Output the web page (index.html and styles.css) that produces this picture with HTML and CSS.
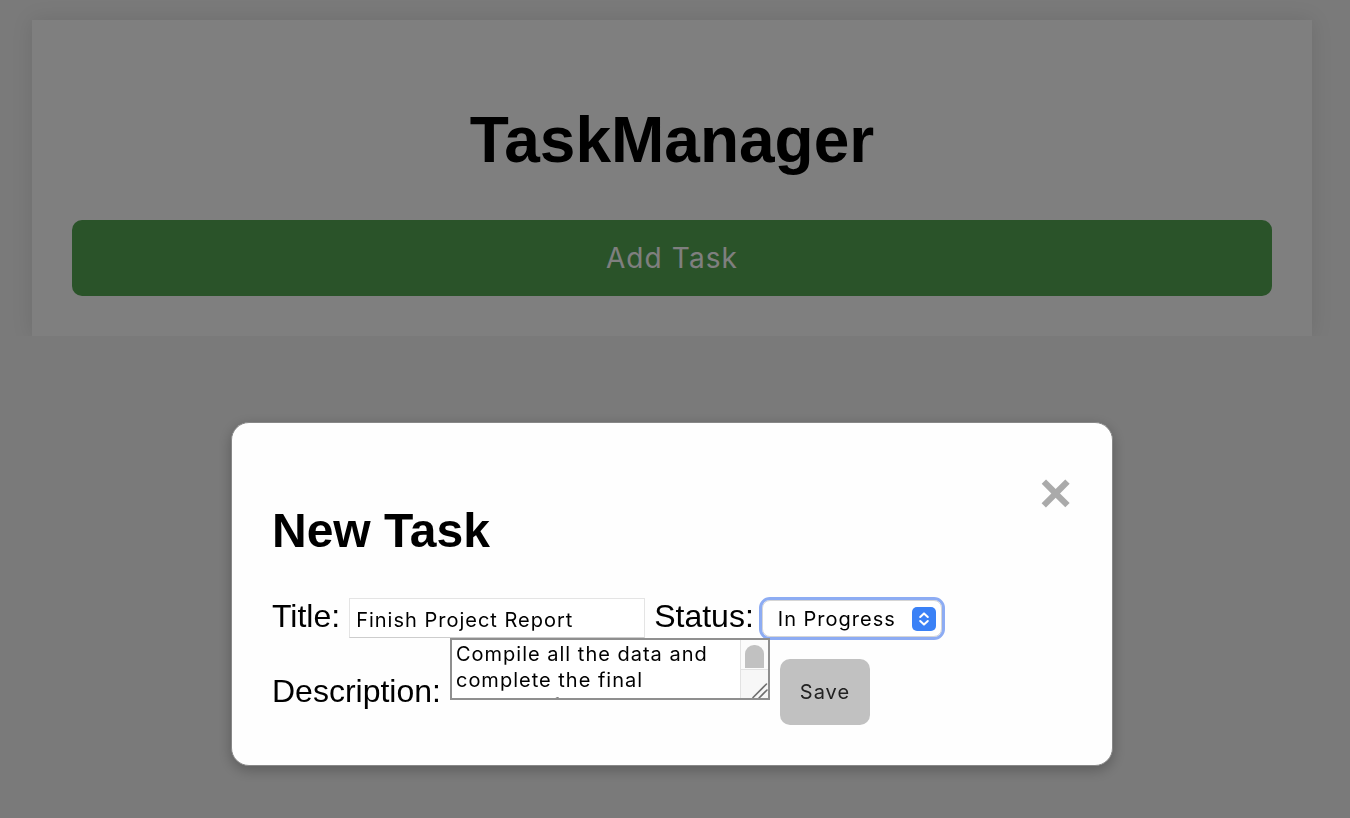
FILE: index.html
```html
<!DOCTYPE html>
<html lang="en">
<head>
<meta charset="utf-8">
<title>TaskManager</title>
<link rel="stylesheet" href="styles.css">
</head>
<body>
<div class="app">
  <h1 class="app-title">TaskManager</h1>
  <button class="add-btn" type="button">Add Task</button>
</div>

<div class="overlay">
  <div class="modal">
    <span class="close">&times;</span>
    <h2 class="modal-title">New Task</h2>
    <form class="task-form">
      <div class="row row-1">
        <label class="lbl" for="title">Title:</label>
        <input id="title" class="text-input" type="text" value="Finish Project Report">
        <label class="lbl" for="status">Status:</label>
        <span class="select-wrap">
          <select id="status" class="select">
            <option>In Progress</option>
          </select>
          <svg class="select-badge" width="24" height="24" viewBox="0 0 24 24" aria-hidden="true">
            <rect x="0" y="0" width="24" height="24" rx="5" fill="#3a81f6"/>
            <path d="M8.2 10 L12 6.4 L15.8 10" fill="none" stroke="#fff" stroke-width="2" stroke-linecap="round" stroke-linejoin="round"/>
            <path d="M8.2 14 L12 17.6 L15.8 14" fill="none" stroke="#fff" stroke-width="2" stroke-linecap="round" stroke-linejoin="round"/>
          </svg>
        </span>
      </div>
      <div class="row row-2">
        <label class="lbl lbl-desc" for="desc">Description:</label>
        <span class="desc-wrap">
          <textarea id="desc" class="desc">Compile all the data and complete the final version of the report.</textarea>
          <span class="sb" aria-hidden="true">
            <span class="sb-track"><span class="sb-thumb"></span></span>
            <span class="sb-resizer">
              <svg width="27" height="29" viewBox="0 0 27 29">
                <path d="M12 27.5 L25.5 14" stroke="#707070" stroke-width="1.6" stroke-linecap="round"/>
                <path d="M18 28 L26 20" stroke="#707070" stroke-width="1.6" stroke-linecap="round"/>
              </svg>
            </span>
          </span>
        </span>
        <button class="save-btn" type="button">Save</button>
      </div>
    </form>
  </div>
</div>
</body>
</html>
```

FILE: styles.css
```css
html, body {
  margin: 0;
  padding: 0;
}

body {
  background: #f4f4f4;
  font-family: "Liberation Sans", Arial, Helvetica, sans-serif;
  color: #000;
}

.app {
  width: 1280px;
  margin: 20px 0 0 32px;
  padding: 40px;
  box-sizing: border-box;
  background: #fff;
  box-shadow: 0 0 20px rgba(0, 0, 0, 0.1);
}

.app-title {
  margin: 43px 0;
  font-size: 64px;
  line-height: 74px;
  font-weight: bold;
  text-align: center;
}

.add-btn {
  display: block;
  width: 100%;
  height: 76px;
  border: 0;
  border-radius: 10px;
  background: #54a652;
  color: #fff;
  font-family: Inter, "Noto Sans", sans-serif;
  font-size: 28px;
  letter-spacing: 1.1px;
}

.overlay {
  position: fixed;
  inset: 0;
  background: rgba(0, 0, 0, 0.5);
  display: flex;
  justify-content: center;
  align-items: flex-start;
  padding: 422px 6px 0 0;
  box-sizing: border-box;
}

.modal {
  width: 882px;
  box-sizing: border-box;
  padding: 40px;
  background: #fefefe;
  border: 1px solid #888;
  border-radius: 18px;
  box-shadow: 0 4px 14px rgba(0, 0, 0, 0.25);
}

.close {
  float: right;
  color: #aaa;
  font-size: 56px;
  font-weight: bold;
  line-height: 60px;
}

.modal-title {
  margin: 40px 0;
  font-size: 48px;
  line-height: 55px;
  font-weight: bold;
}

.task-form {
  margin: 0;
}

.row {
  display: flex;
  align-items: flex-start;
  gap: 9px;
}

.row > * {
  flex-shrink: 0;
}

.row-1 {
  height: 40px;
}

.lbl {
  font-size: 32px;
  line-height: 37px;
}

.text-input {
  width: 296px;
  height: 40px;
  box-sizing: border-box;
  margin: 0;
  padding: 3px 6px 0;
  border: 1px solid #e4e4e4;
  border-bottom-color: #cdcdcd;
  background: #fff;
  color: #000;
  font-family: Inter, "Noto Sans", sans-serif;
  font-size: 20px;
  letter-spacing: 1px;
  outline: none;
}

.select-wrap {
  position: relative;
  display: inline-block;
  margin: 2px 0 0 -1px;
}

.select {
  appearance: none;
  -webkit-appearance: none;
  display: block;
  width: 180px;
  height: 37px;
  box-sizing: border-box;
  margin: 0;
  padding: 0 0 0 15px;
  border: 1px solid #d6d6d6;
  border-radius: 8px;
  background: #fff;
  color: #000;
  font-family: Inter, "Noto Sans", sans-serif;
  font-size: 20px;
  letter-spacing: 1px;
  outline: 3px solid #8dacf3;
  outline-offset: 0;
}

.select-badge {
  position: absolute;
  top: 7px;
  right: 6px;
  pointer-events: none;
}

.lbl-desc {
  margin-top: 35px;
}

.desc-wrap {
  position: relative;
  display: block;
  width: 320px;
  margin-left: 0;
}

.desc {
  display: block;
  width: 320px;
  height: 62px;
  box-sizing: border-box;
  margin: 0;
  padding: 1px 50px 2px 4px;
  border: 2px solid #8f8f8f;
  background: #fff;
  color: #000;
  font-family: Inter, "Noto Sans", sans-serif;
  font-size: 20px;
  line-height: 26px;
  letter-spacing: 1px;
  overflow: hidden;
  resize: none;
  outline: none;
}

.sb {
  position: absolute;
  top: 2px;
  right: 2px;
  bottom: 2px;
  width: 27px;
  display: flex;
  flex-direction: column;
  background: #fbfbfb;
  border-left: 1px solid #e2e2e2;
}

.sb-track {
  display: block;
  height: 29px;
  box-sizing: border-box;
  padding: 5px 4px 0 4px;
}

.sb-thumb {
  display: block;
  height: 23px;
  background: #c1c1c1;
  border-radius: 9px 9px 0 0;
}

.sb-resizer {
  display: block;
  flex: 1;
  border-top: 1px solid #e2e2e2;
  background: #f7f7f7;
  overflow: hidden;
}

.sb-resizer svg {
  display: block;
}

.save-btn {
  width: 90px;
  height: 66px;
  margin: 21px 0 0 1px;
  padding: 0;
  border: 0;
  border-radius: 10px;
  background: #c1c1c1;
  color: #222;
  font-family: Inter, "Noto Sans", sans-serif;
  font-size: 20px;
  letter-spacing: 1px;
}
```
